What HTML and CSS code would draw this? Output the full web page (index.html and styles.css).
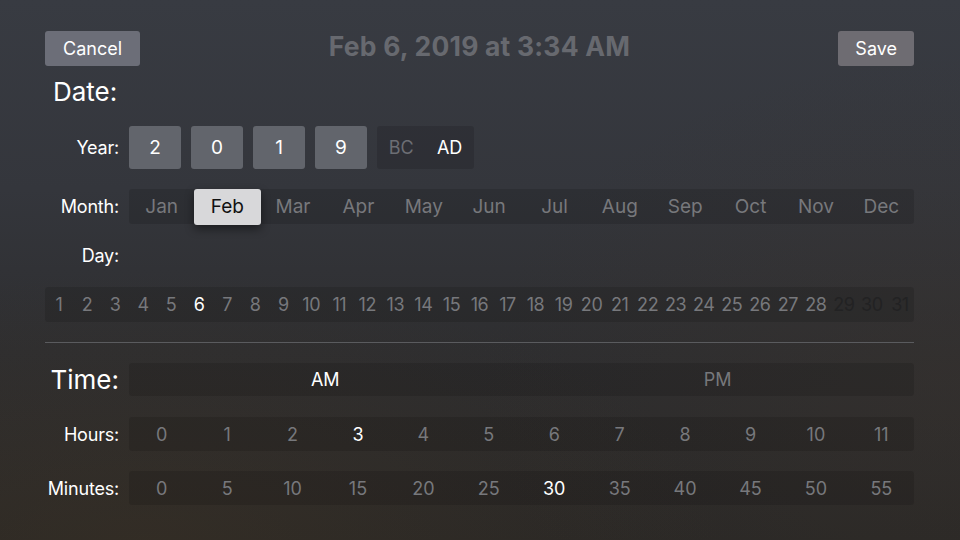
FILE: index.html
```html
<!DOCTYPE html>
<html lang="en">
<head>
<meta charset="UTF-8">
<meta name="viewport" content="width=device-width, initial-scale=1.0">
<title>Date Picker</title>
<link rel="stylesheet" href="styles.css">
</head>
<body>
    <div class="screen">
        <div class="header">
            <button class="btn">Cancel</button>
            <h1 class="title">Feb 6, 2019 at 3:34 AM</h1>
            <button class="btn save">Save</button>
        </div>

        <h2 class="section">Date:</h2>

        <div class="row year-row">
            <span class="label">Year:</span>
            <div class="digit">2</div>
            <div class="digit">0</div>
            <div class="digit">1</div>
            <div class="digit">9</div>
            <div class="era">
                <span class="dim">BC</span>
                <span class="on">AD</span>
            </div>
        </div>

        <div class="row month-row">
            <span class="label">Month:</span>
            <div class="strip months">
                <span>Jan</span>
                <span class="picked">Feb</span>
                <span>Mar</span>
                <span>Apr</span>
                <span>May</span>
                <span>Jun</span>
                <span>Jul</span>
                <span>Aug</span>
                <span>Sep</span>
                <span>Oct</span>
                <span>Nov</span>
                <span>Dec</span>
            </div>
        </div>

        <div class="row day-label-row">
            <span class="label">Day:</span>
        </div>

        <div class="strip days" id="days"></div>

        <hr class="divider">

        <div class="row time-row">
            <span class="label big">Time:</span>
            <div class="strip ampm">
                <span class="on">AM</span>
                <span>PM</span>
            </div>
        </div>

        <div class="row hours-row">
            <span class="label">Hours:</span>
            <div class="strip twelve" id="hours"></div>
        </div>

        <div class="row minutes-row">
            <span class="label">Minutes:</span>
            <div class="strip twelve" id="minutes"></div>
        </div>
    </div>

    <script>
        function fill(id, values, current, lastValid) {
            var box = document.getElementById(id);
            for (var i = 0; i < values.length; i++) {
                var s = document.createElement('span');
                s.textContent = values[i];
                if (values[i] == current) s.className = 'on';
                else if (lastValid && values[i] > lastValid) s.className = 'off';
                box.appendChild(s);
            }
        }

        var days = [], hours = [], minutes = [];
        for (var d = 1; d <= 31; d++) days.push(d);
        for (var h = 0; h < 12; h++) { hours.push(h); minutes.push(h * 5); }

        fill('days', days, 6, 28);
        fill('hours', hours, 3);
        fill('minutes', minutes, 30);
    </script>
</body>
</html>
```

FILE: styles.css
```css
html, body {
    margin: 0;
    padding: 0;
    width: 960px;
    height: 540px;
    overflow: hidden;
}

body {
    font-family: Inter, "Liberation Sans", sans-serif;
    color: #fff;
    background:
        radial-gradient(ellipse 60% 50% at 15% 100%, rgba(70, 55, 35, 0.3), transparent),
        radial-gradient(ellipse 50% 60% at 100% 70%, rgba(60, 52, 45, 0.35), transparent),
        linear-gradient(180deg, #383b42 0%, #34363c 35%, #2e2e30 65%, #2a2826 100%);
}

.screen {
    padding: 31px 46px 0 45px;
}

.header {
    display: grid;
    grid-template-columns: 1fr auto 1fr;
    align-items: center;
    height: 35px;
}

.btn {
    height: 35px;
    padding: 0 18px;
    border: none;
    border-radius: 3px;
    background-color: #6c6e78;
    color: #fff;
    font: 18px Inter, "Liberation Sans", sans-serif;
}

.btn:first-child {
    justify-self: start;
}

.save {
    justify-self: end;
    padding: 0 17px;
    background-color: #6e6c72;
}

.title {
    align-self: start;
    margin: 0;
    font-size: 26.5px;
    line-height: 31px;
    font-weight: 700;
    color: #67696f;
    letter-spacing: 0.2px;
}

.section {
    margin: 10px 0 0 8px;
    font-size: 26px;
    font-weight: 400;
    line-height: 31px;
}

.row {
    display: flex;
    align-items: center;
    gap: 10px;
}

.label {
    width: 74px;
    flex: none;
    text-align: right;
    font-size: 18px;
    letter-spacing: -0.2px;
}

.label.big {
    font-size: 26px;
    letter-spacing: 0;
}

.year-row {
    margin-top: 19px;
    height: 43px;
}

.digit {
    width: 52px;
    height: 43px;
    display: flex;
    align-items: center;
    justify-content: center;
    background-color: #62656c;
    border-radius: 3px;
    font-size: 19px;
}

.era {
    width: 97px;
    height: 43px;
    display: flex;
    align-items: center;
    justify-content: space-around;
    background-color: rgba(0, 0, 0, 0.13);
    border-radius: 3px;
    font-size: 18px;
}

.dim {
    color: #6c6e74;
}

.strip {
    flex: 1;
    display: flex;
    align-items: center;
    height: 35px;
    background-color: rgba(0, 0, 0, 0.12);
    border-radius: 3px;
    font-size: 18px;
    color: #77787c;
}

.strip span {
    flex: 1;
    text-align: center;
}

.strip .on {
    color: #fff;
}

.strip .off {
    color: #222223;
}

.month-row {
    margin-top: 20px;
}

.months {
    font-size: 19px;
}

.months .picked {
    flex: none;
    width: 67px;
    height: 36px;
    line-height: 36px;
    margin: 0 -0.5px;
    background-color: #d8d8da;
    color: #111;
    border-radius: 3px;
    box-shadow: 0 4px 10px rgba(0, 0, 0, 0.45);
}

.day-label-row {
    margin-top: 19px;
    height: 24px;
}

.days {
    margin-top: 20px;
    font-size: 18px;
    letter-spacing: -0.4px;
}

.divider {
    margin: 20px 0 0;
    border: none;
    border-top: 1px solid #5a5b5e;
}

.time-row {
    margin-top: 20px;
}

.ampm {
    height: 33px;
    font-size: 18px;
}

.hours-row {
    margin-top: 21px;
}

.hours-row .strip,
.minutes-row .strip {
    height: 34px;
}

.minutes-row {
    margin-top: 20px;
}
```
